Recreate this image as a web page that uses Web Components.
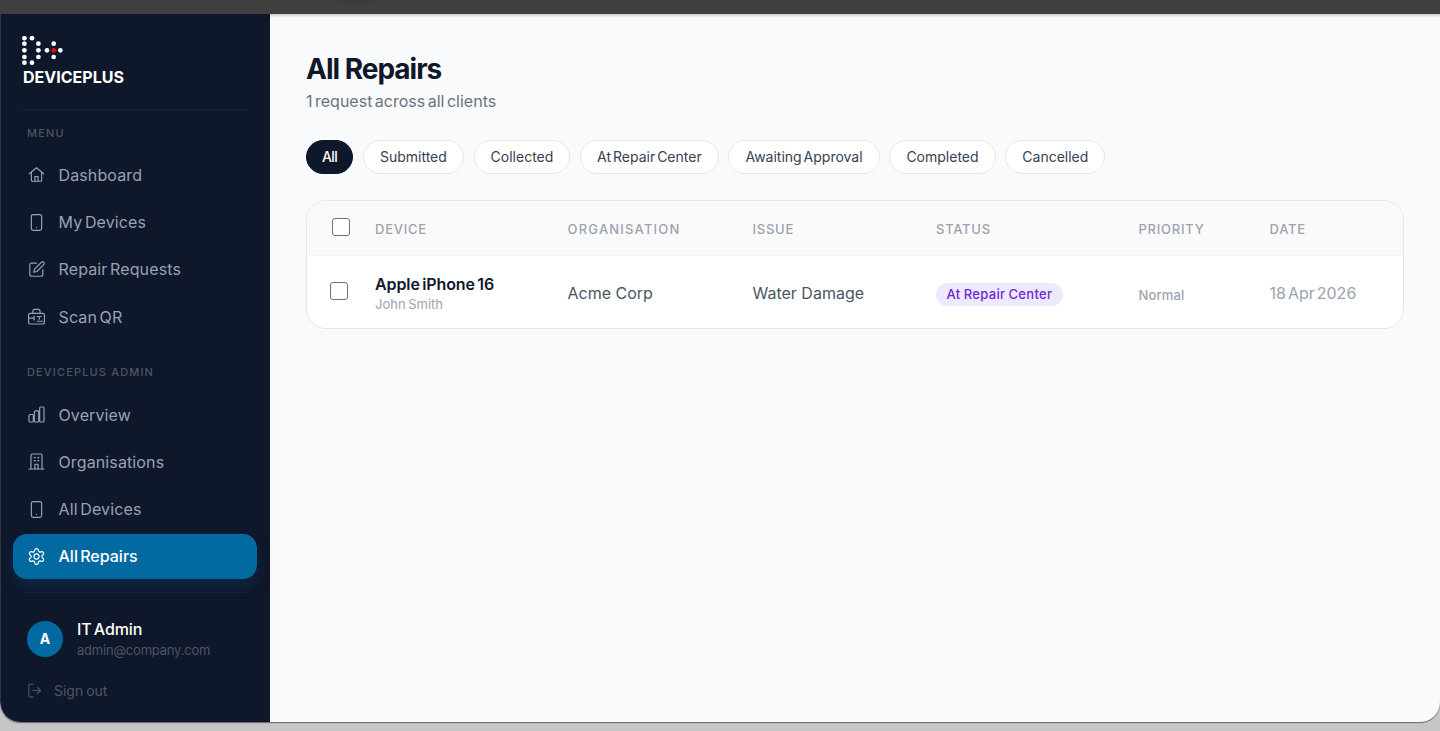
<!DOCTYPE html>
<html lang="en">
<head>
<meta charset="utf-8">
<title>All Repairs</title>
<style>
  html, body { margin: 0; height: 731px; overflow: hidden; background: #c6c6c6; font-family: Inter, "Noto Sans", sans-serif; }
</style>
</head>
<body>
<app-frame>
  <side-bar slot="side"></side-bar>
  <repairs-page slot="main"></repairs-page>
</app-frame>

<script>
const ICONS = {
    home: '<path d="M3 11 12 3.5l9 7.5"/><path d="M5.5 9v10.5a1 1 0 0 0 1 1h11a1 1 0 0 0 1-1V9"/><path d="M10 20.5V14.5h4v6"/>',
    phone: '<rect x="5.5" y="2" width="13" height="20" rx="2.4"/><path d="M12 18.2h.01"/>',
    edit: '<path d="M12 4H6a2.5 2.5 0 0 0-2.5 2.5V18A2.5 2.5 0 0 0 6 20.5h11.5A2.5 2.5 0 0 0 20 18v-6"/><path d="M18.2 2.9a2.1 2.1 0 0 1 3 3L12.5 14.5 8.5 15.5l1-4z"/>',
    scan: '<path d="M2 10a2 2 0 0 1 2-2h16a2 2 0 0 1 2 2v9.5a2 2 0 0 1-2 2H4a2 2 0 0 1-2-2z"/><path d="M7.5 8V5a2 2 0 0 1 2-2h5a2 2 0 0 1 2 2v3"/><path d="M2 14h7M9 11.5v5M13 12h5M15.5 12v3.5M13 18h7"/>',
    chart: '<rect x="2.5" y="12" width="5.5" height="9.5" rx="1.4"/><rect x="9.3" y="7.5" width="5.5" height="14" rx="1.4"/><rect x="16" y="2.5" width="5.5" height="19" rx="1.4"/>',
    building: '<path d="M5 21.5V4a1.5 1.5 0 0 1 1.5-1.5h11A1.5 1.5 0 0 1 19 4v17.5"/><path d="M2.5 21.5h19"/><path d="M9 7h1.5M13.5 7H15M9 11h1.5M13.5 11H15"/><path d="M10 21.5v-6h4v6"/>',
    gear: '<path d="M12.22 2h-.44a2 2 0 0 0-2 2v.18a2 2 0 0 1-1 1.73l-.43.25a2 2 0 0 1-2 0l-.15-.08a2 2 0 0 0-2.73.73l-.22.38a2 2 0 0 0 .73 2.73l.15.1a2 2 0 0 1 1 1.72v.51a2 2 0 0 1-1 1.74l-.15.09a2 2 0 0 0-.73 2.73l.22.38a2 2 0 0 0 2.73.73l.15-.08a2 2 0 0 1 2 0l.43.25a2 2 0 0 1 1 1.73V20a2 2 0 0 0 2 2h.44a2 2 0 0 0 2-2v-.18a2 2 0 0 1 1-1.73l.43-.25a2 2 0 0 1 2 0l.15.08a2 2 0 0 0 2.73-.73l.22-.39a2 2 0 0 0-.73-2.73l-.15-.08a2 2 0 0 1-1-1.74v-.5a2 2 0 0 1 1-1.74l.15-.09a2 2 0 0 0 .73-2.73l-.22-.38a2 2 0 0 0-2.73-.73l-.15.08a2 2 0 0 1-2 0l-.43-.25a2 2 0 0 1-1-1.73V4a2 2 0 0 0-2-2z"/><circle cx="12" cy="12" r="3.2"/>',
    signout: '<path d="M10 21H6a2 2 0 0 1-2-2V5a2 2 0 0 1 2-2h4"/><path d="M16 16.5 20.5 12 16 7.5"/><path d="M20.5 12H9.5"/>'
};

class AppFrame extends HTMLElement {
    constructor() {
        super();
        this.attachShadow({ mode: 'open' });
        this.shadowRoot.innerHTML = `
            <style>
                :host { display: flex; flex-direction: column; height: 722px; }
                .topbar { height: 14px; flex: none; background: radial-gradient(ellipse 40px 4px at 355px 0, #393a44, transparent), #3f3f3f; }
                .window {
                    flex: 1; min-height: 0; display: flex; overflow: hidden;
                    border-radius: 0 0 20px 20px; background: #f9fafc;
                    box-shadow: 0 1px 1px #666;
                }
                ::slotted([slot="side"]) { flex: none; }
                ::slotted([slot="main"]) { flex: 1; min-width: 0; }
            </style>
            <div class="topbar"></div>
            <div class="window">
                <slot name="side"></slot>
                <slot name="main"></slot>
            </div>
        `;
    }
}
customElements.define('app-frame', AppFrame);

class BrandLogo extends HTMLElement {
    constructor() {
        super();
        this.attachShadow({ mode: 'open' });
        const dots = [[2.4,2.2],[10,2.2],[2.4,7.7],[16.4,7.7],[31.7,7.7],[2.4,14.3],[16.4,14.3],[25,14.3],[38.3,14.3],[2.4,21],[16.4,21],[31.7,21],[2.4,26.7],[10,26.7]];
        this.shadowRoot.innerHTML = `
            <style>
                :host { display: block; }
                svg { display: block; }
                .name { margin: 1px 0 0 1px; font-size: 16px; line-height: 20px; font-weight: 700; color: #fff; letter-spacing: 0; }
            </style>
            <svg width="42" height="30" viewBox="0 0 42 30">
                ${dots.map(d => `<circle cx="${d[0]}" cy="${d[1]}" r="2.35" fill="#fff"/>`).join('')}
                <circle cx="31.7" cy="14.3" r="2.35" fill="#e50914"/>
            </svg>
            <div class="name">DEVICEPLUS</div>
        `;
    }
}
customElements.define('brand-logo', BrandLogo);

class NavItem extends HTMLElement {
    constructor() {
        super();
        this.attachShadow({ mode: 'open' });
    }

    connectedCallback() {
        const active = this.hasAttribute('active');
        this.shadowRoot.innerHTML = `
            <style>
                :host { display: block; }
                .item {
                    display: flex; align-items: center; gap: 12.5px; height: 44.6px; padding-left: 14px;
                    border-radius: 14px; color: ${active ? '#fff' : '#98a2b3'};
                    font-size: 16px; font-weight: ${active ? 500 : 400}; letter-spacing: ${active ? '0' : '0.12px'}; word-spacing: -2px;
                    ${active ? 'background: #0369a1; box-shadow: 0 8px 14px rgba(3,105,161,.18);' : ''}
                }
                svg { flex: none; width: 19px; height: 19px; fill: none; stroke: currentColor; stroke-width: 1.5; stroke-linecap: round; stroke-linejoin: round; }
            </style>
            <div class="item">
                <svg viewBox="0 0 24 24">${ICONS[this.getAttribute('icon')]}</svg>
                <slot></slot>
            </div>
        `;
    }
}
customElements.define('nav-item', NavItem);

class SideBar extends HTMLElement {
    constructor() {
        super();
        this.attachShadow({ mode: 'open' });
        this.shadowRoot.innerHTML = `
            <style>
                :host {
                    display: flex; flex-direction: column; width: 270px; box-sizing: border-box;
                    background: #0f172a; border-left: 1px solid #2c3546; border-bottom-left-radius: 20px;
                    overflow: hidden;
                }
                .brand { margin: 0 21px; padding: 22px 0 0; border-bottom: 1px solid #1a2436; height: 73px; }
                .label { margin: 17px 0 0 26px; font-size: 11px; line-height: 13px; font-weight: 500; letter-spacing: 1.15px; color: #4b5563; }
                nav { display: flex; flex-direction: column; gap: 2.65px; margin: 12.7px 13px 0 12px; }
                .label.second { margin-top: 27px; }
                .label.second + nav { margin-top: 13.3px; }
                .foot { margin: 13.7px 21px 0; border-top: 1px solid #172033; }
                .user { display: flex; align-items: center; gap: 14px; margin: 25.5px 0 0 5px; }
                .avatar {
                    width: 36px; height: 36px; border-radius: 50%; background: #0369a1; color: #fff;
                    display: flex; align-items: center; justify-content: center; font-size: 14px; font-weight: 700;
                }
                .who { display: flex; flex-direction: column; gap: 2px; }
                .who b { font-size: 16px; line-height: 20px; font-weight: 500; color: #fff; letter-spacing: -0.1px; word-spacing: -2px; }
                .who span { font-size: 13px; line-height: 18px; color: #4b5563; letter-spacing: -0.2px; }
                .out { display: flex; align-items: center; gap: 11px; margin: 22px 0 0 4px; font-size: 14px; line-height: 20px; color: #4b5563; word-spacing: -1px; }
                .out svg { width: 17px; height: 17px; fill: none; stroke: currentColor; stroke-width: 1.6; stroke-linecap: round; stroke-linejoin: round; }
            </style>
            <div class="brand"><brand-logo></brand-logo></div>
            <div class="label">MENU</div>
            <nav>
                <nav-item icon="home">Dashboard</nav-item>
                <nav-item icon="phone">My Devices</nav-item>
                <nav-item icon="edit">Repair Requests</nav-item>
                <nav-item icon="scan">Scan QR</nav-item>
            </nav>
            <div class="label second">DEVICEPLUS ADMIN</div>
            <nav>
                <nav-item icon="chart">Overview</nav-item>
                <nav-item icon="building">Organisations</nav-item>
                <nav-item icon="phone">All Devices</nav-item>
                <nav-item icon="gear" active>All Repairs</nav-item>
            </nav>
            <div class="foot">
                <div class="user">
                    <div class="avatar">A</div>
                    <div class="who"><b>IT Admin</b><span>admin@company.com</span></div>
                </div>
                <div class="out"><svg viewBox="0 0 24 24">${ICONS.signout}</svg>Sign out</div>
            </div>
        `;
    }
}
customElements.define('side-bar', SideBar);

class FilterChip extends HTMLElement {
    constructor() {
        super();
        this.attachShadow({ mode: 'open' });
        this.shadowRoot.innerHTML = `
            <style>
                :host {
                    display: block; height: 32px; padding: 0 16px; box-sizing: content-box;
                    border: 1px solid #e5e7eb; border-radius: 17px; background: #fff; color: #374151;
                    font-size: 14px; line-height: 32px; font-weight: 400; letter-spacing: 0; word-spacing: -2px;
                }
                :host([active]) { background: #0f172a; border-color: #0f172a; color: #fff; padding: 0 15px; letter-spacing: -0.6px; font-weight: 500; }
            </style>
            <slot></slot>
        `;
    }
}
customElements.define('filter-chip', FilterChip);

class StatusPill extends HTMLElement {
    constructor() {
        super();
        this.attachShadow({ mode: 'open' });
        this.shadowRoot.innerHTML = `
            <style>
                :host {
                    display: inline-block; height: 23px; padding: 0 11px; border-radius: 12px;
                    background: #ede9fe; color: #6d28d9; font-size: 13px; line-height: 23px; font-weight: 500;
                    letter-spacing: 0.32px; word-spacing: -0.6px;
                }
            </style>
            <slot></slot>
        `;
    }
}
customElements.define('status-pill', StatusPill);

class RepairsTable extends HTMLElement {
    constructor() {
        super();
        this.attachShadow({ mode: 'open' });
        this.shadowRoot.innerHTML = `
            <style>
                :host {
                    display: block; background: #fff; border: 1px solid #e5e7eb; border-radius: 20px; overflow: hidden;
                }
                .row { display: grid; grid-template-columns: 68px 192.5px 185px 183.5px 202.5px 131px 1fr; align-items: center; }
                .head { height: 54px; background: #fafafa; border-bottom: 1px solid #f3f4f6; font-size: 13px; font-weight: 500; letter-spacing: 0.75px; color: #9ca3af; }
                .head > div:not(:first-child) { padding-top: 2px; }
                .head .wide { letter-spacing: 1.2px; }
                .body { height: 72px; box-sizing: border-box; padding-top: 2px; font-size: 16px; color: #4b5563; }
                .box { width: 16px; height: 16px; border: 1.5px solid #6b7280; border-radius: 3px; background: #fff; }
                .head .box { margin-left: 25px; margin-top: -3px; }
                .body .box { margin-left: 23px; margin-top: -4px; }
                .device { padding-top: 2px; }
                .device b { display: block; font-size: 16px; line-height: 20px; font-weight: 600; color: #0f172a; letter-spacing: -0.1px; word-spacing: -1.5px; }
                .device span { display: block; font-size: 13px; line-height: 20px; color: #9ca3af; word-spacing: -1px; }
                .small { font-size: 13px; font-weight: 500; color: #9ca3af; padding-top: 3px; letter-spacing: 0.15px; }
                .date { color: #9ca3af; word-spacing: -2.5px; }
                .pill { padding-top: 3px; margin-left: -0.5px; }
            </style>
            <div class="row head">
                <div><div class="box"></div></div>
                <div>DEVICE</div><div class="wide">ORGANISATION</div><div>ISSUE</div><div>STATUS</div><div>PRIORITY</div><div>DATE</div>
            </div>
            <div class="row body">
                <div><div class="box"></div></div>
                <div class="device"><b>Apple iPhone 16</b><span>John Smith</span></div>
                <div>Acme Corp</div>
                <div>Water Damage</div>
                <div class="pill"><status-pill>At Repair Center</status-pill></div>
                <div class="small">Normal</div>
                <div class="date">18 Apr 2026</div>
            </div>
        `;
    }
}
customElements.define('repairs-table', RepairsTable);

class RepairsPage extends HTMLElement {
    constructor() {
        super();
        this.attachShadow({ mode: 'open' });
        this.shadowRoot.innerHTML = `
            <style>
                :host { display: block; padding: 37px 36px 0; box-shadow: inset 0 4px 3px -2px rgba(0,0,0,.18); }
                h1 { margin: 0; font-size: 28px; line-height: 36px; font-weight: 700; color: #0f172a; letter-spacing: -1px; }
                p { margin: 2px 0 0; font-size: 16px; line-height: 24px; color: #6b7280; word-spacing: -2px; }
                .chips { display: flex; gap: 9.75px; margin-top: 26.5px; align-items: center; }
                repairs-table { margin-top: 26.5px; }
            </style>
            <h1>All Repairs</h1>
            <p>1 request across all clients</p>
            <div class="chips">
                <filter-chip active>All</filter-chip>
                <filter-chip>Submitted</filter-chip>
                <filter-chip>Collected</filter-chip>
                <filter-chip>At Repair Center</filter-chip>
                <filter-chip>Awaiting Approval</filter-chip>
                <filter-chip>Completed</filter-chip>
                <filter-chip>Cancelled</filter-chip>
            </div>
            <repairs-table></repairs-table>
        `;
    }
}
customElements.define('repairs-page', RepairsPage);
</script>
</body>
</html>
